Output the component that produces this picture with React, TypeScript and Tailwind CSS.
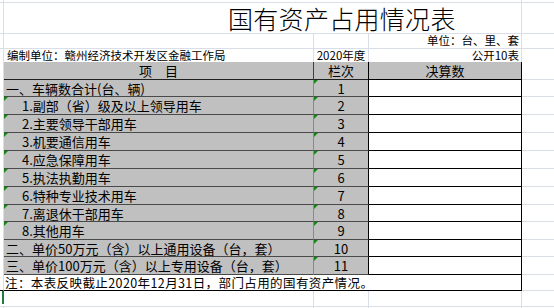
import React from "react";

const rows = [
  { label: "一、车辆数合计(台、辆)", n: "1", sub: false, h: "h-[17px]" },
  { label: "1.副部（省）级及以上领导用车", n: "2", sub: true, h: "h-[18px]" },
  { label: "2.主要领导干部用车", n: "3", sub: true, h: "h-[18px]" },
  { label: "3.机要通信用车", n: "4", sub: true, h: "h-[18px]" },
  { label: "4.应急保障用车", n: "5", sub: true, h: "h-[18px]" },
  { label: "5.执法执勤用车", n: "6", sub: true, h: "h-[18px]" },
  { label: "6.特种专业技术用车", n: "7", sub: true, h: "h-[18px]" },
  { label: "7.离退休干部用车", n: "8", sub: true, h: "h-[17px]" },
  { label: "8.其他用车", n: "9", sub: true, h: "h-[18px]" },
  { label: "二、单价50万元（含）以上通用设备（台，套）", n: "10", sub: false, h: "h-[17px]" },
  { label: "三、单价100万元（含）以上专用设备（台，套）", n: "11", sub: false, h: "h-[18px]" },
];

function Mark() {
  // little green corner like excel's "number stored as text"
  return (
    <span className="absolute top-0 left-0 w-0 h-0 border-t-[4px] border-r-[4px] border-t-[#108a10] border-r-transparent" />
  );
}

export default function App() {
  return (
    <div className="w-[554px] h-[308px] overflow-hidden bg-white text-black leading-none font-['Noto_Sans_CJK_SC','Noto_Sans',sans-serif]">
      {/* top strip */}
      <div className="flex h-[3px] border-b border-[#d9dee8]">
        <div className="w-[4px] shrink-0 border-r border-[#d9dee8]" />
        <div className="w-[518px] shrink-0 border-r border-[#d9dee8]" />
        <div className="flex-1" />
      </div>

      {/* title */}
      <div className="flex h-[31px] border-b border-[#d9dee8]">
        <div className="w-[4px] shrink-0 border-r border-[#d9dee8]" />
        <div className="w-[518px] shrink-0 border-r border-[#d9dee8] flex items-center pl-[224px] text-[25px] font-light tracking-[0.3px]">
          国有资产占用情况表
        </div>
        <div className="flex-1" />
      </div>

      {/* unit */}
      <div className="flex h-[15px] border-b border-[#d9dee8] text-[11.5px]">
        <div className="w-[4px] shrink-0 border-r border-[#d9dee8]" />
        <div className="w-[310px] shrink-0 border-r border-[#d9dee8]" />
        <div className="w-[55px] shrink-0 border-r border-[#d9dee8]" />
        <div className="w-[153px] shrink-0 border-r border-[#d9dee8] flex items-center justify-end pr-[2px] whitespace-nowrap">
          单位：台、里、套
        </div>
        <div className="flex-1" />
      </div>

      {/* org */}
      <div className="flex h-[13px] text-[11.5px]">
        <div className="w-[4px] shrink-0 border-r border-[#d9dee8]" />
        <div className="w-[310px] shrink-0 border-r border-[#d9dee8] flex items-center pl-[3px] whitespace-nowrap">
          编制单位：赣州经济技术开发区金融工作局
        </div>
        <div className="w-[55px] shrink-0 border-r border-[#d9dee8] flex items-center justify-center whitespace-nowrap">
          2020年度
        </div>
        <div className="w-[153px] shrink-0 border-r border-[#d9dee8] flex items-center justify-end pr-[2px] whitespace-nowrap">
          公开10表
        </div>
        <div className="flex-1" />
      </div>

      {/* header */}
      <div className="flex h-[18px] text-[13px]">
        <div className="w-[4px] shrink-0 border-r border-[#d9dee8]" />
        <div className="w-[310px] shrink-0 bg-[#c0c0c0] border-r border-b border-r-[#404040] border-b-[#202020] flex items-center justify-center">
          项　目
        </div>
        <div className="w-[55px] shrink-0 bg-[#c0c0c0] border-r border-b border-r-black border-b-[#202020] flex items-center justify-center">
          栏次
        </div>
        <div className="w-[153px] shrink-0 bg-[#c0c0c0] border-r border-b border-black flex items-center justify-center">
          决算数
        </div>
        <div className="flex-1 border-b border-[#d9dee8]" />
      </div>

      {rows.map((r) => (
        <div key={r.n} className={`flex ${r.h} text-[13px]`}>
          <div className="w-[4px] shrink-0 border-r border-[#d9dee8]" />
          <div
            className={`relative w-[310px] shrink-0 bg-[#c0c0c0] border-r border-b border-r-[#8a8a8a] border-b-[#4a4a4a] flex items-center whitespace-nowrap ${
              r.sub ? "pl-[18px]" : "pl-[2px]"
            }`}
          >
            {r.sub && <Mark />}
            {r.label}
          </div>
          <div className="relative w-[55px] shrink-0 bg-[#c0c0c0] border-r border-b border-r-black border-b-[#4a4a4a] flex items-center justify-center">
            <Mark />
            {r.n}
          </div>
          <div className="w-[153px] shrink-0 bg-white border-r border-b border-black" />
          <div className="flex-1 border-b border-[#d9dee8]" />
        </div>
      ))}

      {/* note */}
      <div className="flex h-[16px] text-[12.5px]">
        <div className="w-[4px] shrink-0 border-r border-b border-r-[#d9dee8] border-b-black" />
        <div className="w-[518px] shrink-0 border-r border-b border-black flex items-center pl-[1px] pt-[1px] whitespace-nowrap tracking-[0.4px]">
          注：本表反映截止2020年12月31日，部门占用的国有资产情况。
        </div>
        <div className="flex-1 border-b border-[#d9dee8]" />
      </div>

      {/* empty row */}
      <div className="flex h-[16px]">
        <div className="w-[4px] shrink-0 border-b border-[#d9dee8] flex">
          <div className="ml-[2px] w-[2px] h-[13px] bg-[#1f7a3e]" />
        </div>
        <div className="w-[310px] shrink-0 border-r border-b border-[#d9dee8]" />
        <div className="w-[55px] shrink-0 border-r border-b border-[#d9dee8]" />
        <div className="w-[153px] shrink-0 border-r border-b border-[#d9dee8]" />
        <div className="flex-1 border-b border-[#d9dee8]" />
      </div>
      <div className="flex h-[3px]">
        <div className="w-[4px] shrink-0 border-r border-[#d9dee8]" />
        <div className="w-[310px] shrink-0 border-r border-[#d9dee8]" />
        <div className="w-[55px] shrink-0 border-r border-[#d9dee8]" />
        <div className="w-[153px] shrink-0 border-r border-[#d9dee8]" />
      </div>
    </div>
  );
}
